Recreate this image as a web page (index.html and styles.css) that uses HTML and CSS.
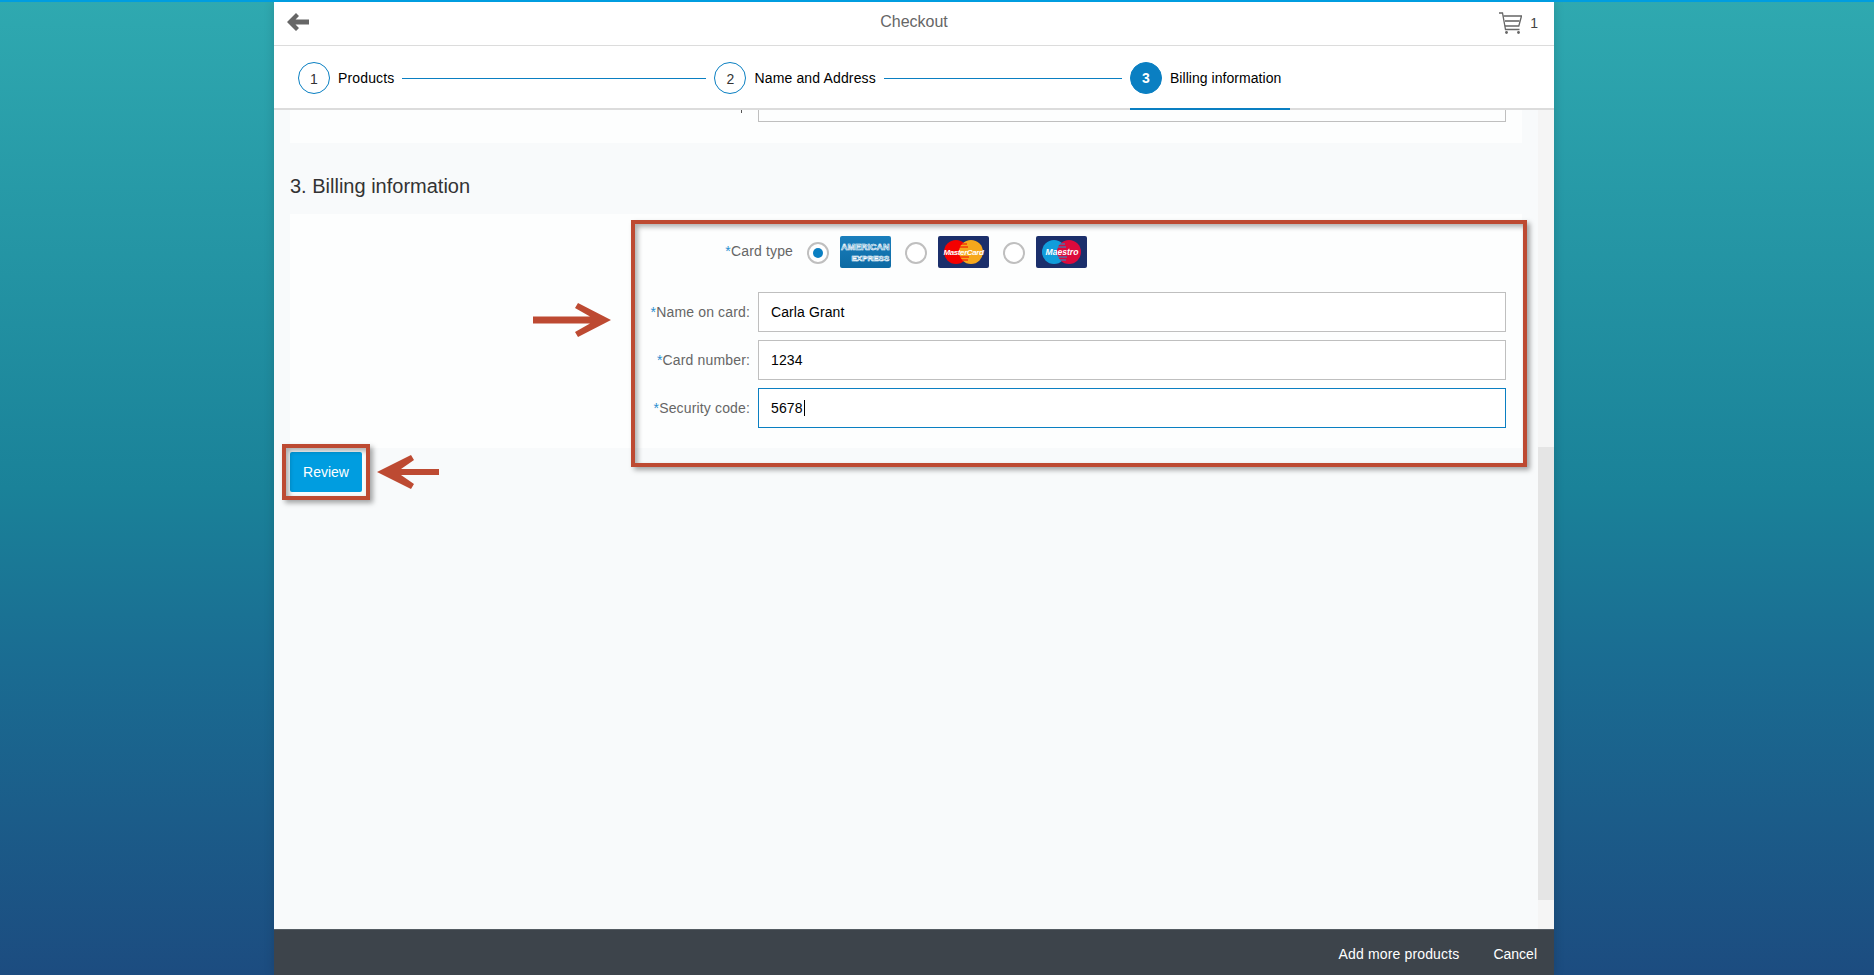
FILE: index.html
```html
<!DOCTYPE html>
<html lang="en">
  <head>
    <meta charset="UTF-8" />
    <title>Checkout</title>
    <link rel="stylesheet" href="styles.css">
  </head>
  <body>
    <div class="shell">
      <header class="topbar">
        <svg class="back" width="22" height="18" viewBox="0 0 22 18"><path d="M9 0 L12 3 L8.5 6.5 H22 V11.5 H8.5 L12 15 L9 18 L0 9 Z" fill="#666"/></svg>
        <div class="page-title">Checkout</div>
        <div class="cart">
          <svg width="23" height="22" viewBox="0 0 23 22" fill="none" stroke="#666" stroke-width="1.3"><path d="M0 1 H3.5 L6.5 17.5 H20.5"/><path d="M4.5 4 H22.5 L19.8 14 H6"/><path d="M6 9 H20.5" stroke-width="1.6"/><circle cx="7.5" cy="20.5" r="1.4" fill="#666" stroke="none"/><circle cx="19.5" cy="20.5" r="1.4" fill="#666" stroke="none"/></svg>
          <span class="cart-count">1</span>
        </div>
      </header>

      <nav class="steps">
        <div class="step"><span class="step-num">1</span><span class="step-name">Products</span></div>
        <div class="step-line line-one"></div>
        <div class="step"><span class="step-num">2</span><span class="step-name">Name and Address</span></div>
        <div class="step-line line-two"></div>
        <div class="step step-current"><span class="step-num">3</span><span class="step-name">Billing information</span></div>
      </nav>

      <div class="content">
        <main class="main">
          <section class="panel panel-cut">
            <div class="cut-mark"></div>
            <div class="cut-input"></div>
          </section>

          <h2 class="section-title">3. Billing information</h2>

          <section class="panel panel-billing">
            <div class="card-row">
              <label class="form-label card-label"><span class="req">*</span>Card type</label>
              <span class="radio radio-on"></span>
              <svg class="card" width="51" height="32" viewBox="0 0 51 32">
                <defs><linearGradient id="amex" x1="0" y1="0" x2="0" y2="1"><stop offset="0" stop-color="#1a7fbd"/><stop offset="1" stop-color="#0d6aa3"/></linearGradient></defs>
                <rect width="51" height="32" rx="2" fill="url(#amex)"/>
                <text class="amex-text" x="1" y="14">AMERICAN</text>
                <text class="amex-text amex-small" x="11.5" y="24.5">EXPRESS</text>
              </svg>
              <span class="radio"></span>
              <svg class="card" width="51" height="32" viewBox="0 0 51 32">
                <rect width="51" height="32" rx="2" fill="#1b2f6b"/>
                <circle cx="18" cy="16" r="12" fill="#f40000"/>
                <circle cx="33" cy="16" r="12" fill="#f6a81c"/>
                <path d="M22 8 H29 M21 11 H30 M20 21 H31 M21 24 H30" stroke="#f40000" stroke-width="1"/>
                <text class="logo-text" x="25.5" y="19">MasterCard</text>
              </svg>
              <span class="radio"></span>
              <svg class="card" width="51" height="32" viewBox="0 0 51 32">
                <rect width="51" height="32" rx="2" fill="#1b2f6b"/>
                <circle cx="18" cy="16" r="12" fill="#119ddb"/>
                <circle cx="33" cy="16" r="12" fill="#dc0a3c"/>
                <path d="M22 8 H29 M21 11 H30 M20 21 H31 M21 24 H30" stroke="#119ddb" stroke-width="1"/>
                <text class="logo-text logo-maestro" x="26" y="19">Maestro</text>
              </svg>
            </div>

            <div class="form-row">
              <label class="form-label"><span class="req">*</span>Name on card:</label>
              <div class="text-input">Carla Grant</div>
            </div>
            <div class="form-row">
              <label class="form-label"><span class="req">*</span>Card number:</label>
              <div class="text-input">1234</div>
            </div>
            <div class="form-row">
              <label class="form-label"><span class="req">*</span>Security code:</label>
              <div class="text-input text-input-focus">5678<span class="caret"></span></div>
            </div>
          </section>

          <button class="review-btn">Review</button>
        </main>

        <div class="scrollbar"><div class="scroll-thumb"></div></div>
      </div>

      <footer class="footbar">
        <a class="foot-link foot-add">Add more products</a>
        <a class="foot-link">Cancel</a>
      </footer>

      <!-- annotations painted on top of the screenshot -->
      <div class="mark mark-form"></div>
      <div class="mark mark-review"></div>
      <svg class="arrow arrow-form" width="78" height="34" viewBox="0 0 78 34"><path d="M0 13.5 H57 L42 5 L45 0 L78 17 L45 34 L42 29 L57 20.5 H0 Z" fill="#bd4a32"/></svg>
      <svg class="arrow arrow-review" width="62" height="34" viewBox="0 0 62 34"><path d="M62 14 H24 L37 5 L34 0 L0 17 L34 34 L37 29 L24 20 H62 Z" fill="#bd4a32"/></svg>
    </div>
  </body>
</html>
```

FILE: styles.css
```css
html, body {
  height: 100%;
}

body {
  margin: 0;
  border-top: 2px solid #009de0;
  box-sizing: border-box;
  background: linear-gradient(180deg, #2fa9b0 0%, #1a8299 50%, #1a6c92 68%, #1c4c80 100%);
  font-family: "Liberation Sans", Arial, sans-serif;
  font-size: 14px;
  color: #000;
  overflow: hidden;
}

.shell {
  position: relative;
  width: 1280px;
  height: 973px;
  margin-left: 274px;
  display: flex;
  flex-direction: column;
  background: #f8fafb;
  box-shadow: 0 0 10px rgba(0, 0, 0, 0.15);
}

/* top bar */
.topbar {
  height: 43px;
  flex: none;
  display: flex;
  align-items: center;
  justify-content: space-between;
  padding: 0 16px 0 13px;
  background: #fff;
  border-bottom: 1px solid #dcdcdc;
}

.back {
  margin-bottom: 3px;
}

.page-title {
  position: absolute;
  left: 0;
  right: 0;
  top: 10px;
  text-align: center;
  font-size: 16px;
  line-height: 20px;
  color: #666;
}

.cart {
  display: flex;
  align-items: center;
  gap: 8px;
  margin-bottom: 2px;
}

.cart-count {
  font-size: 14px;
  color: #444;
}

/* steps */
.steps {
  height: 60px;
  flex: none;
  display: flex;
  align-items: center;
  padding: 2px 0 0 24px;
  background: #fff;
  border-bottom: 2px solid #dcdcdc;
}

.step {
  display: flex;
  align-items: center;
  gap: 8px;
}

.step-num {
  width: 30px;
  height: 28px;
  border: 1px solid #0a7fc2;
  border-radius: 50%;
  display: flex;
  align-items: center;
  justify-content: center;
  font-size: 14px;
  color: #333;
  padding-top: 2px;
}

.step-name {
  font-size: 14px;
  letter-spacing: 0.15px;
  color: #000;
}

.step-line {
  height: 1px;
  margin: 0 8px;
  background: #0a7fc2;
}

.line-one {
  width: 304px;
}

.line-two {
  width: 238px;
}

.step-current {
  align-self: stretch;
  width: 160px;
  position: relative;
}

.step-current .step-num {
  background: #0a7fc2;
  color: #fff;
  font-weight: bold;
  padding-top: 0;
  height: 30px;
}

.step-current .step-name {
  letter-spacing: 0.05px;
}

.step-current::after {
  content: "";
  position: absolute;
  left: 0;
  right: 0;
  bottom: -2px;
  height: 2px;
  background: #0a7fc2;
}

/* scrolled content */
.content {
  flex: 1;
  min-height: 0;
  display: flex;
}

.main {
  flex: 1;
  padding: 0 16px;
}

.panel {
  background: #fdfefe;
}

.panel-cut {
  height: 33px;
  display: flex;
  align-items: flex-start;
  padding-right: 16px;
  justify-content: flex-end;
}

.cut-mark {
  width: 1px;
  height: 3px;
  margin-right: 16px;
  background: #555;
}

.cut-input {
  width: 746px;
  height: 11px;
  border: 1px solid #bfbfbf;
  border-top: 0;
}

.section-title {
  margin: 0;
  height: 71px;
  padding-top: 30px;
  box-sizing: border-box;
  font-weight: normal;
  font-size: 20px;
  line-height: 26px;
  color: #333;
}

.panel-billing {
  height: 234px;
  padding: 22px 16px 0 0;
  box-sizing: border-box;
}

.card-row {
  height: 32px;
  display: flex;
  align-items: center;
  margin-bottom: 24px;
}

.form-label {
  color: #666;
  text-align: right;
  letter-spacing: 0.15px;
}

.req {
  color: #2a8fd0;
}

.card-label {
  width: 503px;
  margin-right: 14px;
  padding-bottom: 2px;
}

.radio {
  width: 22px;
  height: 22px;
  box-sizing: border-box;
  border: 2px solid #bfbfbf;
  border-radius: 50%;
  margin: 2px 11px 0 0;
  display: flex;
  align-items: center;
  justify-content: center;
  background: #fff;
}

.radio-on::after {
  content: "";
  width: 10px;
  height: 10px;
  border-radius: 50%;
  background: #0a7fc2;
}

.card {
  margin-right: 14px;
  display: block;
}

.amex-text {
  font-family: "Liberation Sans", sans-serif;
  font-weight: bold;
  font-size: 9px;
  fill: #1a7fbd;
  stroke: #fff;
  stroke-width: 0.6px;
}

.amex-small {
  font-size: 8px;
}

.logo-text {
  font-family: "Liberation Sans", sans-serif;
  font-style: italic;
  font-weight: bold;
  font-size: 8px;
  letter-spacing: -0.4px;
  fill: #fff;
  text-anchor: middle;
}

.logo-maestro {
  font-size: 8.6px;
  letter-spacing: 0;
}

.form-row {
  display: flex;
  align-items: center;
  height: 40px;
  margin-bottom: 8px;
}

.form-row .form-label {
  width: 460px;
  margin-right: 8px;
}

.text-input {
  flex: 1;
  height: 40px;
  box-sizing: border-box;
  border: 1px solid #bfbfbf;
  background: #fff;
  padding: 0 12px;
  line-height: 39px;
  letter-spacing: 0.1px;
  color: #000;
}

.text-input-focus {
  border-color: #0a7fc2;
}

.caret {
  display: inline-block;
  width: 1px;
  height: 16px;
  margin-left: 1px;
  background: #000;
  vertical-align: -3px;
}

.review-btn {
  display: block;
  width: 72px;
  height: 40px;
  margin-top: 4px;
  border: 0;
  border-radius: 2px;
  background: #009de0;
  color: #fff;
  font-family: inherit;
  font-size: 14px;
}

.scrollbar {
  width: 16px;
  flex: none;
  background: #f5f5f5;
  padding-top: 337px;
  padding-bottom: 29px;
  box-sizing: border-box;
}

.scroll-thumb {
  height: 100%;
  background: #e5e5e5;
}

/* footer */
.footbar {
  height: 46px;
  flex: none;
  box-sizing: border-box;
  display: flex;
  align-items: center;
  justify-content: flex-end;
  gap: 34px;
  padding: 3px 17px 0 0;
  background: #3d444b;
  border-top: 1px solid #555c63;
  color: #fff;
}

.foot-add {
  letter-spacing: 0.15px;
}

/* annotations */
.mark {
  position: absolute;
  box-sizing: border-box;
  border: 4px solid #bd4a32;
  box-shadow: 3px 3px 5px rgba(0, 0, 0, 0.35), inset 3px 3px 5px rgba(0, 0, 0, 0.3);
}

.mark-form {
  left: 357px;
  top: 218px;
  width: 896px;
  height: 247px;
}

.mark-review {
  left: 8px;
  top: 442px;
  width: 88px;
  height: 56px;
}

.arrow {
  position: absolute;
}

.arrow-form {
  left: 259px;
  top: 301px;
}

.arrow-review {
  left: 103px;
  top: 453px;
}
```
